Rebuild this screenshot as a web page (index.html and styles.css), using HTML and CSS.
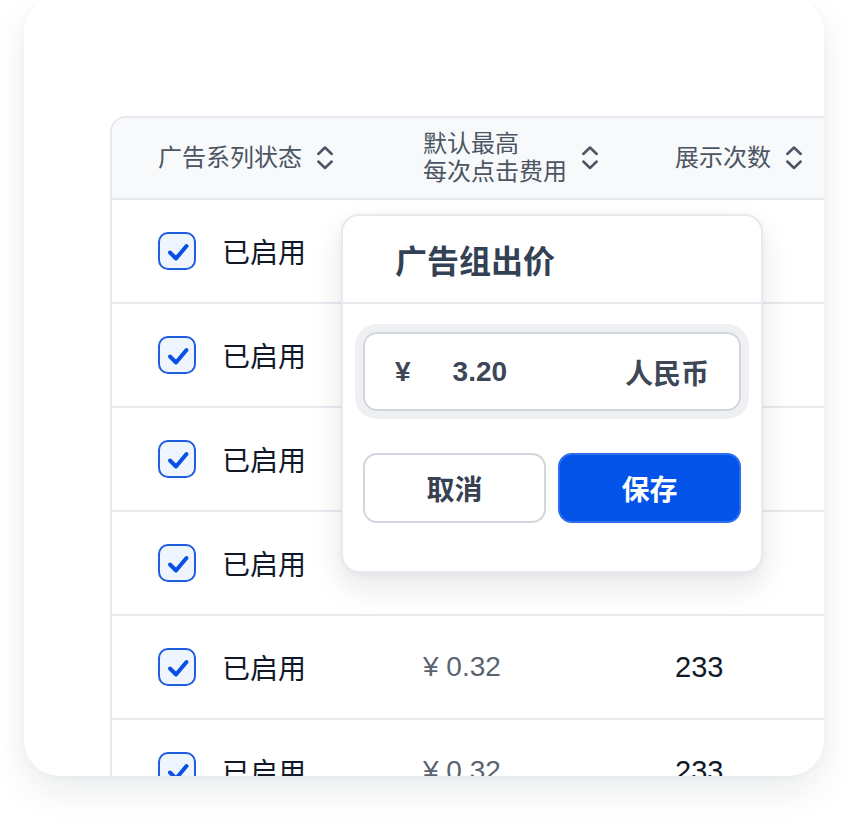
FILE: index.html
```html
<!DOCTYPE html>
<html lang="zh-CN">
<head>
<meta charset="utf-8">
<title>广告组出价</title>
<link rel="stylesheet" href="styles.css">
</head>
<body>
<div class="page">
  <div class="card">
    <div class="table">
      <div class="thead">
        <div class="th"><span>广告系列状态</span><svg class="sort" viewBox="0 0 18 24"><path d="M2.3 8 L9 1.5 L15.7 8"/><path d="M2.3 15.5 L9 22 L15.7 15.5"/></svg></div>
        <div class="th"><span>默认最高<br>每次点击费用</span><svg class="sort" viewBox="0 0 18 24"><path d="M2.3 8 L9 1.5 L15.7 8"/><path d="M2.3 15.5 L9 22 L15.7 15.5"/></svg></div>
        <div class="th"><span>展示次数</span><svg class="sort" viewBox="0 0 18 24"><path d="M2.3 8 L9 1.5 L15.7 8"/><path d="M2.3 15.5 L9 22 L15.7 15.5"/></svg></div>
      </div>
      <div class="row">
        <div class="status"><span class="checkbox"><svg viewBox="0 0 34 34"><path d="M10 18.5 L16 24.5 L26.5 12"/></svg></span><span>已启用</span></div>
        <div class="price">¥ 0.32</div>
        <div class="count">233</div>
      </div>
      <div class="row">
        <div class="status"><span class="checkbox"><svg viewBox="0 0 34 34"><path d="M10 18.5 L16 24.5 L26.5 12"/></svg></span><span>已启用</span></div>
        <div class="price">¥ 0.32</div>
        <div class="count">233</div>
      </div>
      <div class="row">
        <div class="status"><span class="checkbox"><svg viewBox="0 0 34 34"><path d="M10 18.5 L16 24.5 L26.5 12"/></svg></span><span>已启用</span></div>
        <div class="price">¥ 0.32</div>
        <div class="count">233</div>
      </div>
      <div class="row">
        <div class="status"><span class="checkbox"><svg viewBox="0 0 34 34"><path d="M10 18.5 L16 24.5 L26.5 12"/></svg></span><span>已启用</span></div>
        <div class="price">¥ 0.32</div>
        <div class="count">233</div>
      </div>
      <div class="row">
        <div class="status"><span class="checkbox"><svg viewBox="0 0 34 34"><path d="M10 18.5 L16 24.5 L26.5 12"/></svg></span><span>已启用</span></div>
        <div class="price">¥ 0.32</div>
        <div class="count">233</div>
      </div>
      <div class="row">
        <div class="status"><span class="checkbox"><svg viewBox="0 0 34 34"><path d="M10 18.5 L16 24.5 L26.5 12"/></svg></span><span>已启用</span></div>
        <div class="price">¥ 0.32</div>
        <div class="count">233</div>
      </div>
    </div>

    <div class="popover">
      <div class="pop-head">广告组出价</div>
      <div class="pop-body">
        <div class="input">
          <span class="yen">¥</span>
          <span class="amount">3.20</span>
          <span class="unit">人民币</span>
        </div>
        <div class="actions">
          <button class="btn btn-cancel">取消</button>
          <button class="btn btn-save">保存</button>
        </div>
      </div>
    </div>
  </div>
</div>
</body>
</html>
```
FILE: styles.css
```css
html, body {
  margin: 0;
  padding: 0;
  background: #ffffff;
}

body {
  font-family: "Liberation Sans", "Noto Sans CJK SC", sans-serif;
  color: #111827;
}

.page {
  height: 824px;
  padding: 0 24px;
  overflow: hidden;
}

.card {
  position: relative;
  box-sizing: border-box;
  width: 800px;
  height: 780px;
  margin-top: -4px;
  padding: 120px 0 0 86px;
  background: #ffffff;
  border-radius: 36px;
  overflow: hidden;
  box-shadow: 0 16px 36px rgba(17, 24, 39, 0.08), 0 2px 8px rgba(17, 24, 39, 0.03);
}

.table {
  width: 780px;
  border-top: 2px solid #e6e8ee;
  border-left: 2px solid #e6e8ee;
  border-top-left-radius: 16px;
}

.thead,
.row {
  display: grid;
  grid-template-columns: 265px 252px 1fr;
  align-items: center;
  padding-left: 46px;
}

.thead {
  height: 80px;
  background: #f8f9fb;
  border-bottom: 2px solid #e6e8ee;
  border-top-left-radius: 14px;
}

.th {
  display: flex;
  align-items: center;
  gap: 14px;
  font-size: 24px;
  line-height: 28px;
  color: #4b5563;
}

.sort {
  width: 18px;
  height: 24px;
  flex: none;
  fill: none;
  stroke: #4b5563;
  stroke-width: 2.5;
  stroke-linecap: round;
  stroke-linejoin: round;
}

.row {
  height: 102px;
  border-bottom: 2px solid #e9eaf0;
  font-size: 28px;
}

.status {
  display: flex;
  align-items: center;
  gap: 26px;
  color: #111827;
}

.checkbox {
  box-sizing: border-box;
  width: 38px;
  height: 38px;
  border: 2px solid #1d5fe0;
  border-radius: 10px;
  background: #eef5ff;
  display: flex;
}

.checkbox svg {
  width: 34px;
  height: 34px;
  fill: none;
  stroke: #0b50e6;
  stroke-width: 4;
  stroke-linecap: round;
  stroke-linejoin: round;
}

.price {
  color: #5b6472;
}

.count {
  color: #111827;
  font-size: 29px;
}

.popover {
  position: absolute;
  left: 317px;
  top: 218px;
  box-sizing: border-box;
  width: 422px;
  background: #ffffff;
  border: 2px solid #e8e9ef;
  border-radius: 18px;
  box-shadow: 0 14px 30px rgba(15, 23, 42, 0.10), 0 2px 6px rgba(15, 23, 42, 0.04);
}

.pop-head {
  box-sizing: border-box;
  height: 88px;
  padding: 0 0 0 52px;
  display: flex;
  align-items: center;
  border-bottom: 2px solid #e8e9ef;
  font-size: 32px;
  font-weight: 700;
  color: #334155;
}

.pop-body {
  padding: 28px 20px 48px;
}

.input {
  box-sizing: border-box;
  height: 79px;
  display: flex;
  align-items: center;
  padding: 0 30px;
  border: 2px solid #d3d6de;
  border-radius: 14px;
  box-shadow: 0 0 0 8px #eef0f4;
  font-size: 28px;
  font-weight: 700;
  color: #3d4756;
}

.amount {
  margin-left: 42px;
}

.unit {
  margin-left: auto;
}

.actions {
  display: grid;
  grid-template-columns: 1fr 1fr;
  gap: 12px;
  margin-top: 42px;
}

.btn {
  height: 70px;
  border-radius: 14px;
  font-family: "Liberation Sans", "Noto Sans CJK SC", sans-serif;
  font-size: 28px;
  font-weight: 700;
  padding: 0;
}

.btn-cancel {
  background: #ffffff;
  border: 2px solid #d3d6de;
  color: #374151;
}

.btn-save {
  background: #0353e9;
  border: 2px solid #2b6cf0;
  color: #ffffff;
}
```
